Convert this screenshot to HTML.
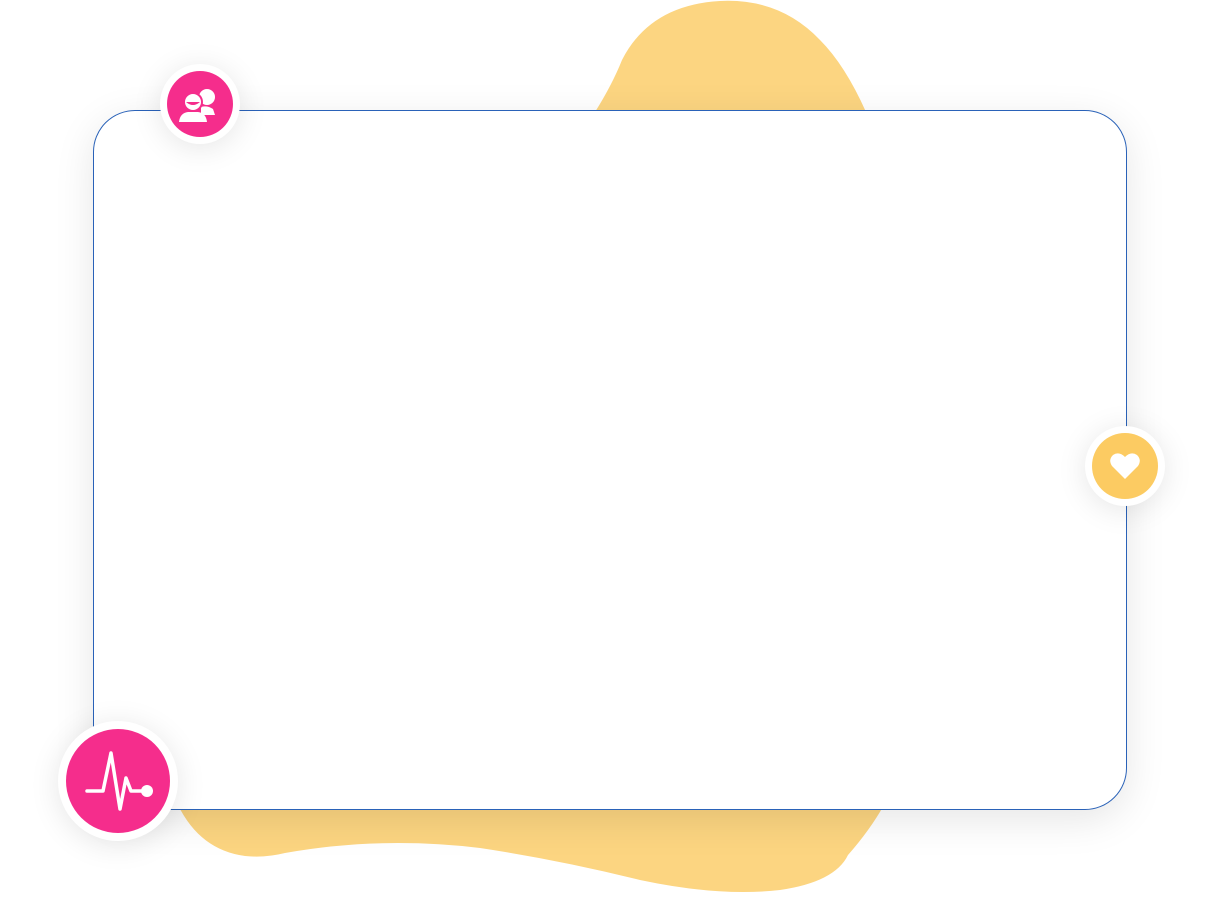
<!DOCTYPE html>
<html><head><style>
body{margin:0;width:1224px;height:902px;background:#fff;position:relative;overflow:hidden;font-family:"Liberation Sans",sans-serif}
.card{position:absolute;left:93px;top:110px;width:1032px;height:698px;border:1px solid #2a62b8;border-radius:42px;background:#fff;box-shadow:0 10px 40px rgba(0,0,0,0.10)}
.c{position:absolute;border-radius:50%;background:#fff;box-shadow:0 4px 30px rgba(0,0,0,0.10)}
.c .i{position:absolute;border-radius:50%}
</style></head><body>
<svg style="position:absolute;left:0;top:0" width="1224" height="902">
<path d="M595 112 Q612 85 622 60 Q650 5 720 1 Q780 -2 820 40 Q845 65 866 112 Z" fill="#fcd581"/>
<path d="M178 805 Q200 850 245 856 Q265 858 285 853 Q380 836 480 848 Q560 860 640 880 Q720 897 780 890 Q835 882 848 855 Q870 830 884 805 Z" fill="#fcd581"/>
</svg>
<div class="card"></div>
<div class="c" style="left:160px;top:64px;width:80px;height:80px"><div class="i" style="left:7px;top:7px;width:66px;height:66px;background:#f52d8c">
<svg width="66" height="66" viewBox="0 0 66 66">
<circle cx="40" cy="26" r="8" fill="#fff"/><path d="M34 36 Q40 34 46 38 L48 44 L34 44Z" fill="#fff"/>
<circle cx="26" cy="31" r="10" fill="#f52d8c"/><circle cx="26" cy="31" r="8" fill="#fff"/>
<path d="M19 31 Q26 37 33 31 Z" fill="#f52d8c"/>
<path d="M12 51 Q13 42 21 41 L31 41 Q39 42 40 51Z" fill="#fff"/></svg></div></div>
<div class="c" style="left:1085px;top:426px;width:80px;height:80px"><div class="i" style="left:7px;top:7px;width:66px;height:66px;background:#fccb62">
<svg width="66" height="66" viewBox="0 0 66 66"><path d="M33 46 L20 33 Q16 27 21 22 Q27 18 33 24 Q39 18 45 22 Q50 27 46 33 Z" fill="#fff"/></svg></div></div>
<div class="c" style="left:58px;top:721px;width:120px;height:120px"><div class="i" style="left:8px;top:8px;width:104px;height:104px;background:#f52d8c">
<svg width="104" height="104" viewBox="0 0 104 104"><polyline points="21,62 37,62 45,24 54,80 60,49 65,62 80,62" fill="none" stroke="#fff" stroke-width="3.5" stroke-linejoin="round" stroke-linecap="round"/><circle cx="81" cy="62" r="6" fill="#fff"/></svg></div></div>
</body></html>
